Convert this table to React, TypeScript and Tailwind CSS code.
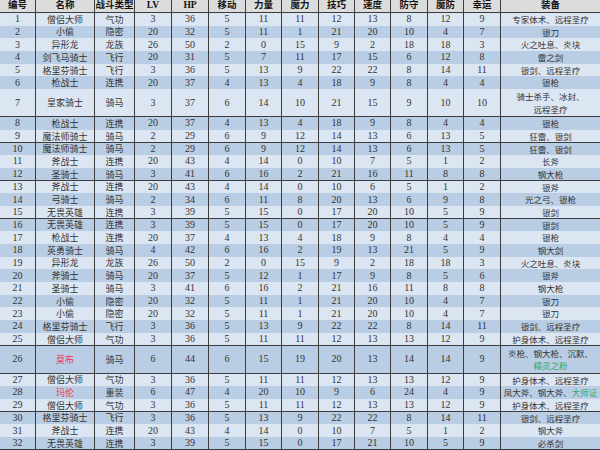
import type { ReactNode } from 'react';

type Unit = {
  name: string;
  type: string;
  stats: number[];
  equip: ReactNode;
  red?: boolean;
  tall?: boolean;
};

const headers = ['编号', '名称', '战斗类型', 'LV', 'HP', '移动', '力量', '魔力', '技巧', '速度', '防守', '魔防', '幸运', '装备'];

const green = (t: string) => <span className="text-[#2fa86a]">{t}</span>;

const units: Unit[] = [
  { name: '僧侣大师', type: '气功', stats: [3, 36, 5, 11, 11, 12, 13, 8, 12, 9], equip: '专家体术、远程圣疗' },
  { name: '小偷', type: '隐密', stats: [20, 32, 5, 11, 1, 21, 20, 10, 4, 7], equip: '银刀' },
  { name: '异形龙', type: '龙族', stats: [26, 50, 2, 0, 15, 9, 2, 18, 18, 3], equip: '火之吐息、炎块' },
  { name: '剑飞马骑士', type: '飞行', stats: [20, 31, 5, 7, 11, 17, 15, 6, 12, 8], equip: '雷之剑' },
  { name: '格里芬骑士', type: '飞行', stats: [3, 36, 5, 13, 9, 22, 22, 8, 14, 11], equip: '银剑、远程圣疗' },
  { name: '枪战士', type: '连携', stats: [20, 37, 4, 13, 4, 18, 9, 8, 4, 4], equip: '银枪' },
  {
    name: '皇家骑士', type: '骑马', stats: [3, 37, 6, 14, 10, 21, 15, 9, 10, 10], tall: true,
    equip: <>骑士杀手、冰封、<br />远程圣疗</>,
  },
  { name: '枪战士', type: '连携', stats: [20, 37, 4, 13, 4, 18, 9, 8, 4, 4], equip: '银枪' },
  { name: '魔法师骑士', type: '骑马', stats: [2, 29, 6, 9, 12, 14, 13, 6, 13, 5], equip: '狂雷、银剑' },
  { name: '魔法师骑士', type: '骑马', stats: [2, 29, 6, 9, 12, 14, 13, 6, 13, 5], equip: '狂雷、银剑' },
  { name: '斧战士', type: '连携', stats: [20, 43, 4, 14, 0, 10, 7, 5, 1, 2], equip: '长斧' },
  { name: '圣骑士', type: '骑马', stats: [3, 41, 6, 16, 2, 21, 16, 11, 8, 8], equip: '钢大枪' },
  { name: '斧战士', type: '连携', stats: [20, 43, 4, 14, 0, 10, 6, 5, 1, 2], equip: '银斧' },
  { name: '弓骑士', type: '骑马', stats: [2, 34, 6, 11, 8, 20, 13, 6, 9, 8], equip: '光之弓、银枪' },
  { name: '无畏英雄', type: '连携', stats: [3, 39, 5, 15, 0, 17, 20, 10, 5, 9], equip: '银剑' },
  { name: '无畏英雄', type: '连携', stats: [3, 39, 5, 15, 0, 17, 20, 10, 5, 9], equip: '银剑' },
  { name: '枪战士', type: '连携', stats: [20, 37, 4, 13, 4, 18, 9, 8, 4, 4], equip: '银枪' },
  { name: '英勇骑士', type: '骑马', stats: [4, 42, 6, 16, 2, 19, 13, 21, 5, 9], equip: '钢大剑' },
  { name: '异形龙', type: '龙族', stats: [26, 50, 2, 0, 15, 9, 2, 18, 18, 3], equip: '火之吐息、炎块' },
  { name: '斧骑士', type: '骑马', stats: [20, 37, 5, 12, 1, 17, 9, 8, 5, 6], equip: '银斧' },
  { name: '圣骑士', type: '骑马', stats: [3, 41, 6, 16, 2, 21, 16, 11, 8, 8], equip: '钢大枪' },
  { name: '小偷', type: '隐密', stats: [20, 32, 5, 11, 1, 21, 20, 10, 4, 7], equip: '银刀' },
  { name: '小偷', type: '隐密', stats: [20, 32, 5, 11, 1, 21, 20, 10, 4, 7], equip: '银刀' },
  { name: '格里芬骑士', type: '飞行', stats: [3, 36, 5, 13, 9, 22, 22, 8, 14, 11], equip: '银剑、远程圣疗' },
  { name: '僧侣大师', type: '气功', stats: [3, 36, 5, 11, 11, 12, 13, 13, 12, 9], equip: '护身体术、远程圣疗' },
  {
    name: '莫布', type: '骑马', stats: [6, 44, 6, 15, 19, 20, 13, 14, 14, 9], red: true, tall: true,
    equip: <>炎枪、钢大枪、沉默、<br />{green('精灵之粉')}</>,
  },
  { name: '僧侣大师', type: '气功', stats: [3, 36, 5, 11, 11, 12, 13, 13, 12, 9], equip: '护身体术、远程圣疗' },
  {
    name: '玛伦', type: '重装', stats: [6, 47, 4, 20, 10, 9, 6, 24, 4, 9], red: true,
    equip: <>凤大斧、钢大斧、{green('大师证')}</>,
  },
  { name: '僧侣大师', type: '气功', stats: [3, 36, 5, 11, 11, 12, 13, 13, 12, 9], equip: '护身体术、远程圣疗' },
  { name: '格里芬骑士', type: '飞行', stats: [3, 36, 5, 13, 9, 22, 22, 8, 14, 11], equip: '银剑、远程圣疗' },
  { name: '斧战士', type: '连携', stats: [20, 43, 4, 14, 0, 10, 7, 5, 1, 2], equip: '钢大斧' },
  { name: '无畏英雄', type: '连携', stats: [3, 39, 5, 15, 0, 17, 21, 10, 5, 9], equip: '必杀剑' },
];

const cols = 'grid grid-cols-[35px_58px_39px_36px_36px_36px_35px_36px_35px_35px_36px_35px_36px_1fr] gap-px';
const cell = 'flex items-center justify-center text-center leading-none whitespace-nowrap';
const cjk = { fontFamily: '"Noto Sans CJK SC", sans-serif' };

export default function App() {
  return (
    <div
      className="w-[600px] h-[450px] overflow-hidden bg-[#3c3c3c] flex flex-col gap-px text-[#333]"
      style={{ fontFamily: '"Liberation Serif", "Noto Sans CJK SC", serif' }}
    >
      {/* Header */}
      <div className={`${cols} h-[12px] shrink-0`}>
        {headers.map((h) => (
          <div key={h} className={`${cell} bg-[#dcdcdc] text-[9.5px] font-bold text-[#111]`}>
            {h}
          </div>
        ))}
      </div>

      {units.map((u, i) => {
        const bg = i % 2 === 0 ? 'bg-[#dce6f2]' : 'bg-[#b9cde4]';
        return (
          <div key={i} className={`${cols} shrink-0 ${u.tall ? 'h-[27px]' : 'h-[11.7px]'}`}>
            <div className={`${cell} ${bg} text-[10px]`}>{i + 1}</div>
            <div className={`${cell} ${bg} text-[9px] ${u.red ? 'text-[#e8384f]' : ''}`} style={cjk}>
              {u.name}
            </div>
            <div className={`${cell} ${bg} text-[9px]`} style={cjk}>
              {u.type}
            </div>
            {u.stats.map((s, j) => (
              <div key={j} className={`${cell} ${bg} text-[10px]`}>
                {s}
              </div>
            ))}
            <div className={`${cell} ${bg} text-[8.5px]`} style={cjk}>
              <div className="leading-[12.5px]">{u.equip}</div>
            </div>
          </div>
        );
      })}
    </div>
  );
}
